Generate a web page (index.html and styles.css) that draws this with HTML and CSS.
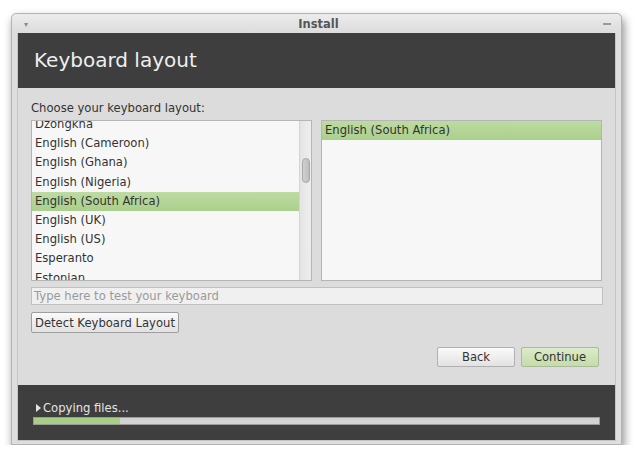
FILE: index.html
```html
<!DOCTYPE html>
<html>
<head>
<meta charset="utf-8">
<link rel="stylesheet" href="styles.css">
</head>
<body>
<div class="window">
  <div class="titlebar">
    <span class="tb-menu">&#9662;</span>
    <span class="tb-title">Install</span>
    <span class="tb-min"></span>
  </div>
  <div class="content">
    <div class="header">Keyboard layout</div>
    <div class="main">
      <div class="label">Choose your keyboard layout:</div>
      <div class="lists">
        <div class="list left">
          <div class="rows">
            <div class="row">Dzongkha</div>
            <div class="row">English (Cameroon)</div>
            <div class="row">English (Ghana)</div>
            <div class="row">English (Nigeria)</div>
            <div class="row sel">English (South Africa)</div>
            <div class="row">English (UK)</div>
            <div class="row">English (US)</div>
            <div class="row">Esperanto</div>
            <div class="row">Estonian</div>
          </div>
          <div class="scrollbar"><div class="thumb"></div></div>
        </div>
        <div class="list right">
          <div class="rows top">
            <div class="row sel">English (South Africa)</div>
          </div>
        </div>
      </div>
      <div class="input">Type here to test your keyboard</div>
      <div class="detect-row"><button class="btn">Detect Keyboard Layout</button></div>
      <div class="nav">
        <button class="btn back">Back</button>
        <button class="btn cont">Continue</button>
      </div>
    </div>
    <div class="footer">
      <div class="status"><span class="tri"></span>Copying files...</div>
      <div class="progress"><div class="fill" style="width:86px"></div></div>
    </div>
  </div>
</div>
</body>
</html>
```

FILE: styles.css
```css
html, body {
  margin: 0;
  padding: 0;
  background: #ffffff;
}
body {
  font-family: "DejaVu Sans", "Liberation Sans", sans-serif;
  font-size: 11.6px;
  color: #333;
  padding: 13px 0 0 11px;
}
.window {
  width: 599px;
  background: #dedede;
  border: 1px solid #b4b4b4;
  border-radius: 5px 5px 0 0;
  padding: 0 5px 3px 5px;
  box-shadow: 2px 5px 10px rgba(0,0,0,0.45);
}
.titlebar {
  height: 19px;
  box-sizing: border-box;
  display: flex;
  align-items: center;
  justify-content: space-between;
  background: linear-gradient(#ececec, #dcdcdc);
  margin: 0 -5px;
  padding: 1px 8px 0 12px;
  border-radius: 5px 5px 0 0;
}
.tb-menu {
  font-size: 8px;
  color: #8a8a8a;
}
.tb-title {
  font-weight: bold;
  font-size: 11.5px;
  color: #555;
  margin-left: 6px;
}
.tb-min {
  width: 8px;
  height: 2px;
  background: #999;
  margin-right: 2px;
}
.content {
  border: 1px solid #c4c4c4;
  border-top: none;
}
.header {
  height: 55px;
  background: #3e3e3e;
  color: #eeeeee;
  font-size: 20px;
  display: flex;
  align-items: center;
  padding-left: 16px;
  padding-bottom: 1px;
  box-sizing: border-box;
}
.main {
  background: #dcdcdc;
  padding: 13px 13px 18px 13px;
}
.label {
  color: #333;
  height: 14px;
  line-height: 14px;
  margin-bottom: 5px;
}
.lists {
  display: flex;
  gap: 9px;
}
.list {
  width: 282px;
  height: 161px;
  box-sizing: border-box;
  border: 1px solid #b5b5b5;
  background: #f7f7f7;
  overflow: hidden;
  display: flex;
}
.rows {
  flex: 1;
  margin-top: -6px;
}
.rows.top {
  margin-top: 0;
}
.row {
  height: 19.2px;
  line-height: 19px;
  padding-left: 3px;
  color: #333;
  white-space: nowrap;
}
.row.sel {
  background: linear-gradient(#bddba2, #abcf8c);
}
.scrollbar {
  width: 11px;
  background: linear-gradient(90deg, #e4e4e4, #eeeeee);
  border-left: 1px solid #d4d4d4;
  position: relative;
}
.thumb {
  position: absolute;
  left: 2px;
  top: 37px;
  width: 6px;
  height: 23px;
  border: 1px solid #a8a8a8;
  border-radius: 4px;
  background: linear-gradient(90deg, #d0d0d0, #bdbdbd);
}
.input {
  margin-top: 6px;
  width: 572px;
  height: 18px;
  box-sizing: border-box;
  border: 1px solid #c0c0c0;
  background: #f0f0f0;
  color: #9a9a9a;
  line-height: 16px;
  padding-left: 2px;
}
.detect-row {
  margin-top: 7px;
}
.btn {
  font-family: "DejaVu Sans", "Liberation Sans", sans-serif;
  font-size: 11.6px;
  color: #333;
  height: 21px;
  padding: 0 2px;
  border: 1px solid #9e9e9e;
  border-radius: 2px;
  background: linear-gradient(#fafafa, #e2e2e2);
}
.detect-row .btn {
  width: 148px;
}
.nav {
  margin-top: 14px;
  display: flex;
  justify-content: flex-end;
  gap: 6px;
  padding-right: 3px;
}
.nav .btn {
  height: 20px;
  width: 78px;
  border-color: #b0b0b0;
}
.nav .cont {
  background: linear-gradient(#dcebc9, #c4dcaa);
  border-color: #a9b99a;
}
.footer {
  height: 55px;
  background: #3e3e3e;
  padding: 16px 15px 0 15px;
  box-sizing: border-box;
}
.status {
  color: #e4e4e4;
  height: 14px;
  line-height: 14px;
  display: flex;
  align-items: center;
  margin-left: 3px;
}
.tri {
  width: 0;
  height: 0;
  border-top: 4px solid transparent;
  border-bottom: 4px solid transparent;
  border-left: 5px solid #e4e4e4;
  margin-right: 2px;
}
.progress {
  margin-top: 2px;
  width: 567px;
  height: 8px;
  box-sizing: border-box;
  border: 1px solid #9a9a9a;
  background: #d2d2d2;
}
.fill {
  height: 100%;
  background: #a6cf85;
}
```
